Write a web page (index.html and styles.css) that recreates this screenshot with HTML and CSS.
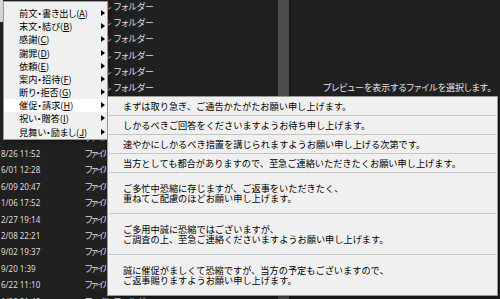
FILE: index.html
```html
<!DOCTYPE html>
<html lang="ja">
<head>
<meta charset="utf-8">
<link rel="stylesheet" href="styles.css">
</head>
<body>
<div class="explorer">
  <div class="list">
    <div class="row"><span class="date"></span><span class="type"><span class="t1">ファイル</span> フォルダー</span></div>
    <div class="row"><span class="date"></span><span class="type"><span class="t1">ファイル</span> フォルダー</span></div>
    <div class="row"><span class="date"></span><span class="type"><span class="t1">ファイル</span> フォルダー</span></div>
    <div class="row"><span class="date"></span><span class="type"><span class="t1">ファイル</span> フォルダー</span></div>
    <div class="row"><span class="date"></span><span class="type"><span class="t1">ファイル</span> フォルダー</span></div>
    <div class="row"><span class="date"></span><span class="type"><span class="t1">ファイル</span> フォルダー</span></div>
    <div class="row"><span class="date"></span><span class="type"><span class="t1">ファイル</span> フォルダー</span></div>
    <div class="row"><span class="date"></span><span class="type"><span class="t1">ファイル</span> フォルダー</span></div>
    <div class="row"><span class="date"></span><span class="type"><span class="t1">ファイル</span> フォルダー</span></div>
    <div class="row"><span class="date">8/26 11:52</span><span class="type"><span class="t1">ファイル</span> フォルダー</span></div>
    <div class="row"><span class="date">6/01 12:28</span><span class="type"><span class="t1">ファイル</span> フォルダー</span></div>
    <div class="row"><span class="date">6/09 20:47</span><span class="type"><span class="t1">ファイル</span> フォルダー</span></div>
    <div class="row"><span class="date">1/06 17:52</span><span class="type"><span class="t1">ファイル</span> フォルダー</span></div>
    <div class="row"><span class="date">2/27 19:14</span><span class="type"><span class="t1">ファイル</span> フォルダー</span></div>
    <div class="row"><span class="date">2/08 22:21</span><span class="type"><span class="t1">ファイル</span> フォルダー</span></div>
    <div class="row"><span class="date">9/02 19:37</span><span class="type"><span class="t1">ファイル</span> フォルダー</span></div>
    <div class="row"><span class="date">9/20 1:39</span><span class="type"><span class="t1">ファイル</span> フォルダー</span></div>
    <div class="row"><span class="date">6/22 11:10</span><span class="type"><span class="t1">ファイル</span> フォルダー</span></div>
    <div class="row"><span class="date">1/08 21:48</span><span class="type"><span class="t1">ファイル</span> フォルダー</span></div>
  </div>
  <div class="scroll"><div class="thumb"></div></div>
  <div class="divider"></div>
  <div class="preview">
    <p class="hint">プレビューを表示するファイルを選択します。</p>
  </div>
</div>

<div class="edge"></div>

<ul class="menu main">
  <li class="mi"><span>前文・書き出し(<u>A</u>)</span><i class="arrow"></i></li>
  <li class="mi"><span>末文・結び(<u>B</u>)</span><i class="arrow"></i></li>
  <li class="mi"><span>感謝(<u>C</u>)</span><i class="arrow"></i></li>
  <li class="mi"><span>謝罪(<u>D</u>)</span><i class="arrow"></i></li>
  <li class="mi"><span>依頼(<u>E</u>)</span><i class="arrow"></i></li>
  <li class="mi"><span>案内・招待(<u>F</u>)</span><i class="arrow"></i></li>
  <li class="mi"><span>断り・拒否(<u>G</u>)</span><i class="arrow"></i></li>
  <li class="mi active"><span>催促・請求(<u>H</u>)</span><i class="arrow"></i></li>
  <li class="mi"><span>祝い・贈答(<u>I</u>)</span><i class="arrow"></i></li>
  <li class="mi"><span>見舞い・励まし(<u>J</u>)</span><i class="arrow"></i></li>
</ul>

<ul class="menu sub">
  <li class="si">まずは取り急ぎ、ご通告かたがたお願い申し上げます。</li>
  <li class="sep"></li>
  <li class="si">しかるべきご回答をくださいますようお待ち申し上げます。</li>
  <li class="sep"></li>
  <li class="si">速やかにしかるべき措置を講じられますようお願い申し上げる次第です。</li>
  <li class="sep"></li>
  <li class="si">当方としても都合がありますので、至急ご連絡いただきたくお願い申し上げます。</li>
  <li class="sep"></li>
  <li class="si two">ご多忙中恐縮に存じますが、ご返事をいただきたく、<br>重ねてご配慮のほどお願い申し上げます。</li>
  <li class="sep"></li>
  <li class="si two">ご多用中誠に恐縮ではございますが、<br>ご調査の上、至急ご連絡くださいますようお願い申し上げます。</li>
  <li class="sep"></li>
  <li class="si two">誠に催促がましくて恐縮ですが、当方の予定もございますので、<br>ご返事賜りますようお願い申し上げます。</li>
</ul>
</body>
</html>
```

FILE: styles.css
```css
* { box-sizing: border-box; }
html, body {
  margin: 0;
  padding: 0;
  width: 500px;
  height: 299px;
  overflow: hidden;
  background: #202020;
  font-family: "Noto Sans CJK JP", "Noto Sans", sans-serif;
}

.explorer {
  display: flex;
  width: 500px;
  height: 299px;
  background: #202020;
  color: #dedede;
}

.list {
  width: 278px;
  margin-top: -2.2px;
  font-size: 9px;
  font-feature-settings: "palt";
}

.row {
  height: 16.4px;
  display: flex;
  align-items: center;
  white-space: nowrap;
}

.date {
  width: 85px;
  padding-left: 1px;
  font-family: "Noto Sans", sans-serif;
  font-size: 8px;
  color: #dcdcdc;
}

.type {
  color: #dcdcdc;
}

.t1 {
  letter-spacing: -1.6px;
  margin-right: 2px;
}

.scroll {
  width: 11px;
  background: #202020;
}
.thumb {
  height: 100%;
  background: #4c4c4c;
}

.divider {
  width: 2px;
  background: #181818;
}

.preview {
  flex: 1;
  padding-left: 32px;
  padding-top: 81px;
}

.hint {
  margin: 0;
  font-size: 9px;
  line-height: 14px;
  font-feature-settings: "palt";
  color: #e2e2e2;
  white-space: nowrap;
}

.edge {
  position: absolute;
  left: 0;
  top: 0;
  width: 3px;
  height: 22px;
  background: #d4d4d4;
}

.menu {
  list-style: none;
  margin: 0;
  position: absolute;
  background: #f0f0f0;
  border: 1px solid #9a9a9a;
  color: #000;
  box-shadow: 2px 2px 3px rgba(0, 0, 0, 0.35);
}

.main {
  left: 3px;
  top: 1px;
  width: 105px;
  padding: 4.4px 0 1px;
  font-size: 9.2px;
  font-feature-settings: "palt";
}

.mi {
  height: 13.2px;
  display: flex;
  align-items: center;
  padding-left: 15px;
  padding-right: 2px;
  white-space: nowrap;
}

.mi u {
  text-underline-offset: 1px;
}

.mi.active {
  background: #ffffff;
}

.arrow {
  margin-left: auto;
  width: 0;
  height: 0;
  border-top: 3.5px solid transparent;
  border-bottom: 3.5px solid transparent;
  border-left: 4px solid #000;
}

.sub {
  left: 107px;
  top: 96px;
  width: 391px;
  padding: 0;
  font-size: 9.2px;
}

.si {
  height: 18px;
  display: flex;
  align-items: center;
  padding-left: 15px;
  white-space: nowrap;
  line-height: 10px;
}

.si.two {
  height: 40px;
  display: block;
  padding-top: 10px;
}

.sep {
  height: 1px;
  margin: 0 1px;
  background: #c4c4c4;
}
```
